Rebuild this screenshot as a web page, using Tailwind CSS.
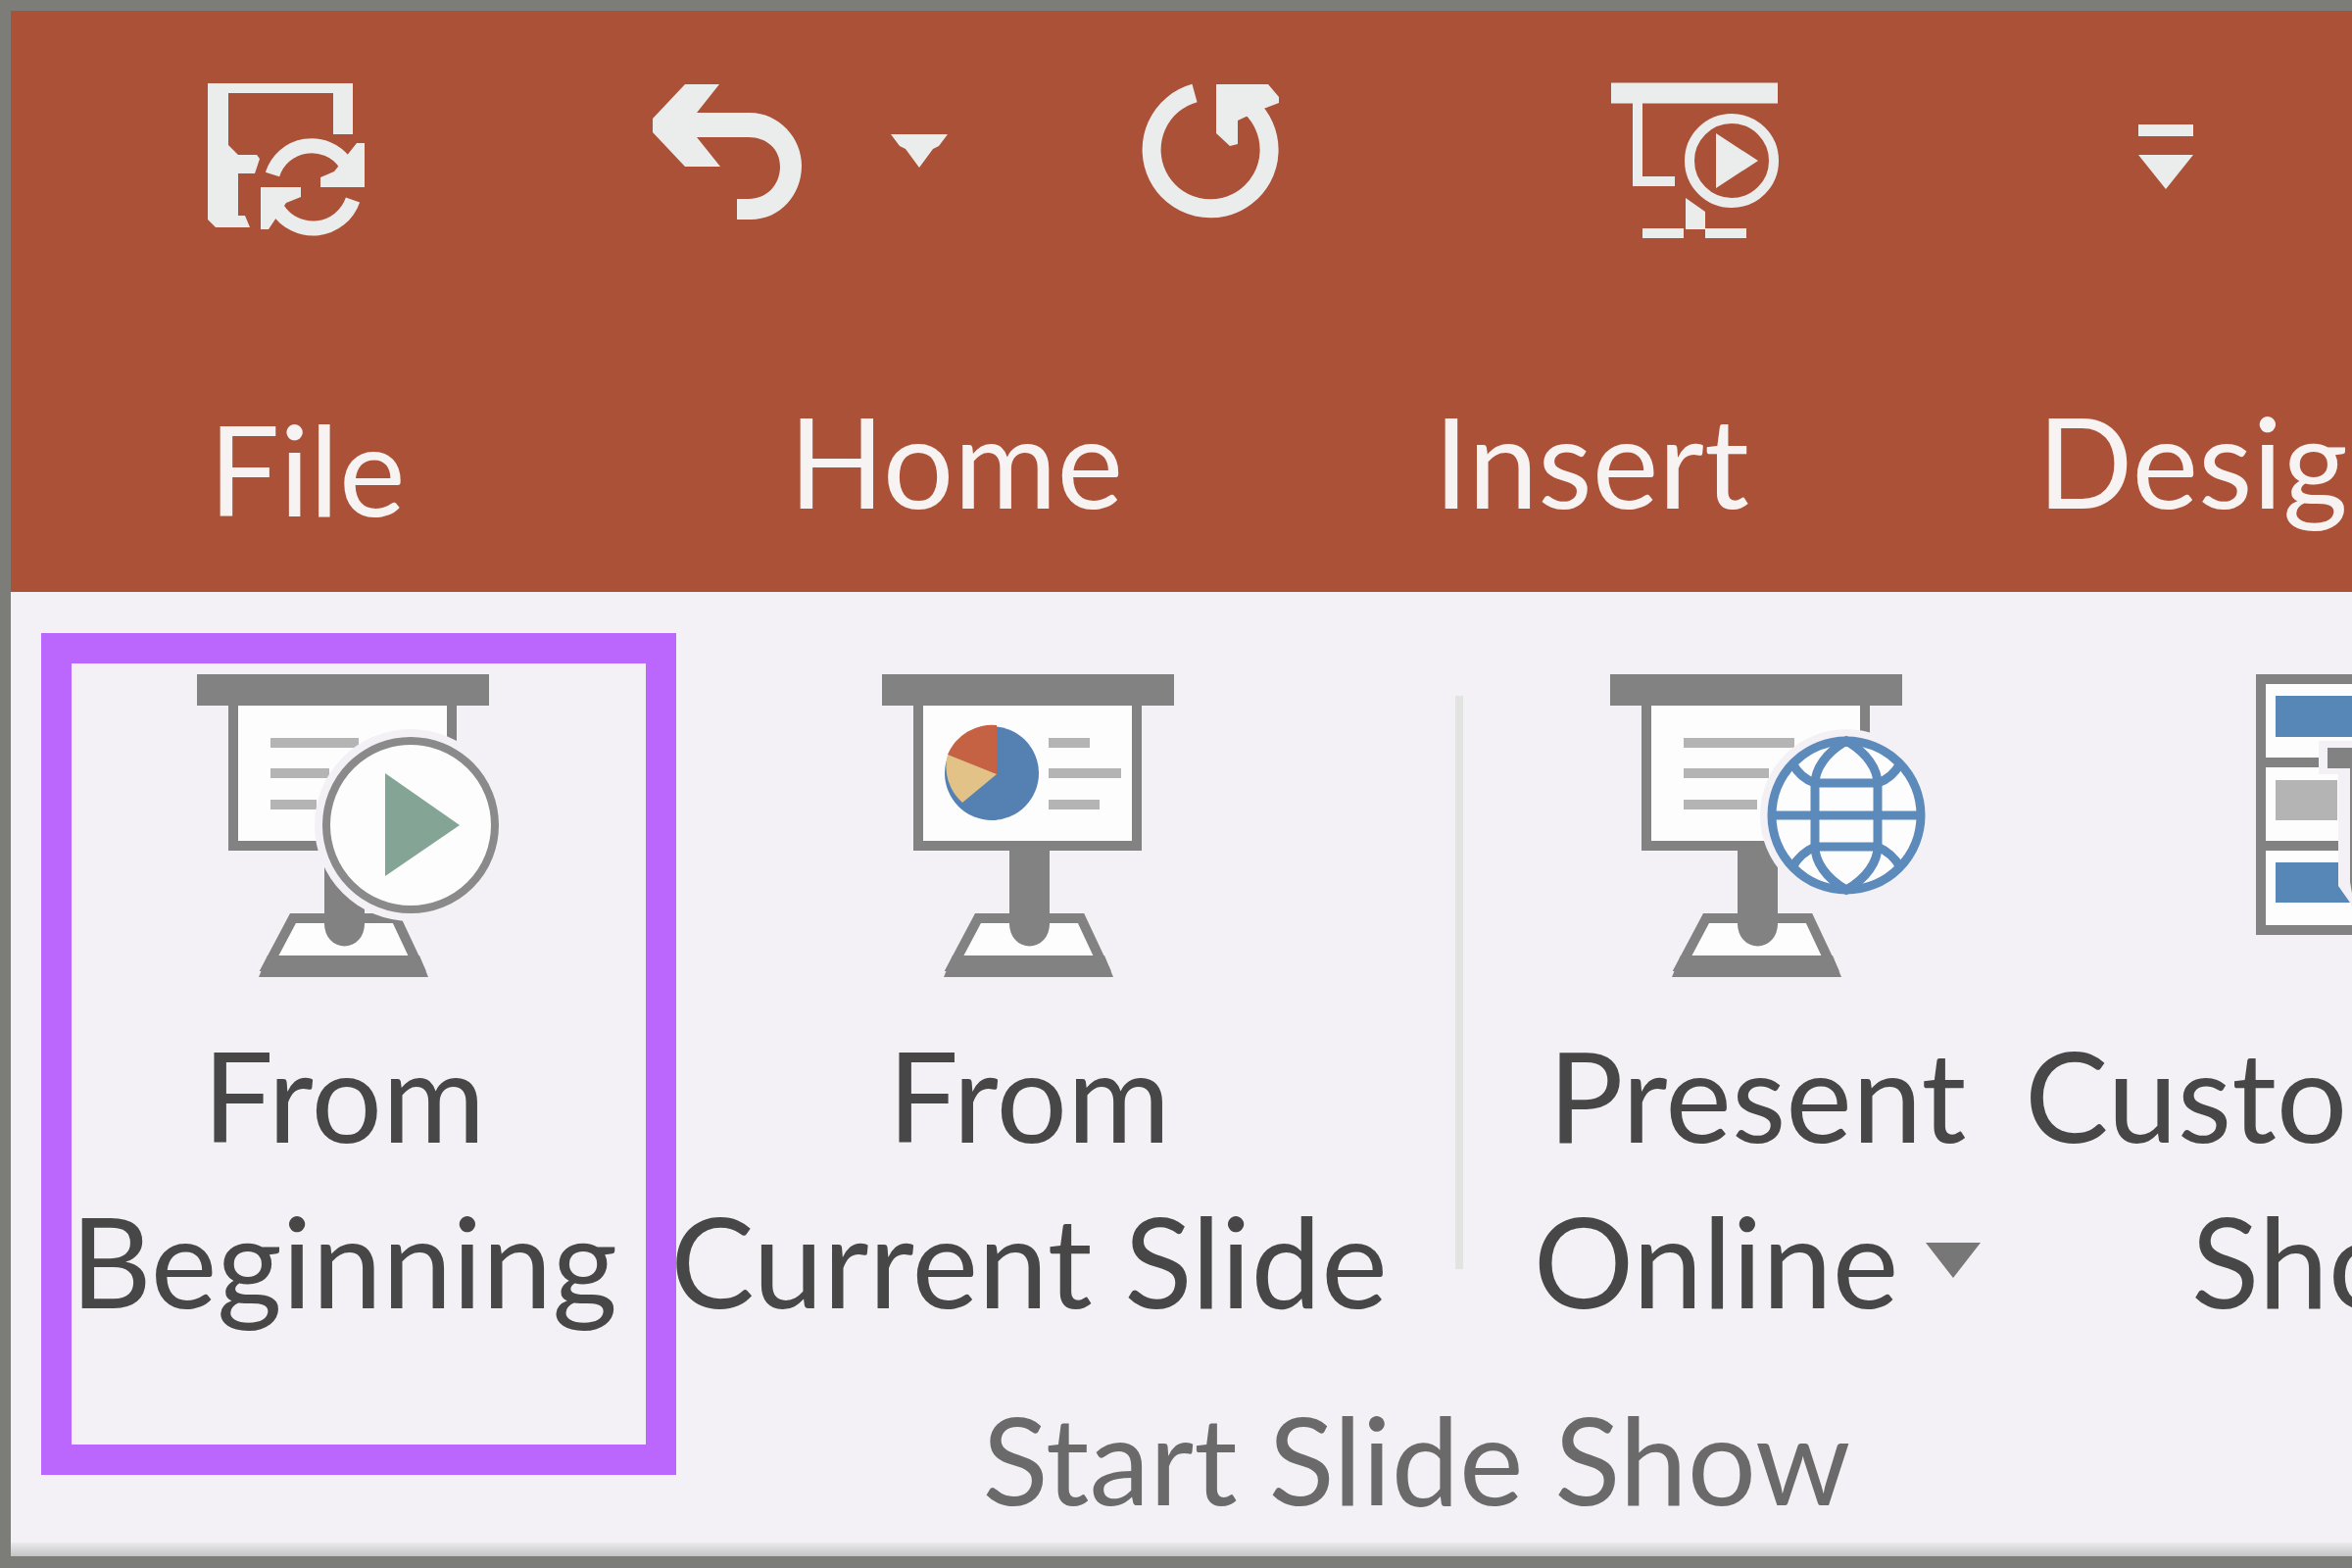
<!DOCTYPE html>
<html lang="en">
<head>
<meta charset="utf-8">
<title>Slide Show ribbon</title>
<script src="https://cdn.jsdelivr.net/npm/@tailwindcss/browser@4"></script>
</head>
<body class="overflow-hidden">
<div class="flex min-h-screen flex-col overflow-hidden border-t-11 border-b-12 border-l-11 border-[#7c7d79] bg-[#f3f1f5] font-['Lato','Open_Sans',sans-serif] text-[#474747]">

  <header class="bg-[#ab5137] pt-[73px] pb-9 text-[#ebedec]">
    <div class="flex h-[164px] items-start pl-[199px]" role="toolbar" aria-label="Quick access">
      <button class="mr-[290px] shrink-0" aria-label="Save">
        <svg class="block h-[164px] w-[164px]" viewBox="30 24 164 164" fill="currentColor">
          <path d="M32 25H180V77H160V35H53V88L63 98H82L85 102L80 117H63V160H70L75 172H40L32 164Z" />
          <path d="M98 118A42 42 0 0 1 172 106" fill="none" stroke="currentColor" stroke-width="15" />
          <path d="M192 86V131H147V121L161 115L184 86Z" />
          <path d="M180 144A43 43 0 0 1 103 153" fill="none" stroke="currentColor" stroke-width="15" />
          <path d="M86 174V131H127V141L112 147L94 174Z" />
        </svg>
      </button>
      <button class="mr-[88px] shrink-0" aria-label="Undo">
        <svg class="block h-[144px] w-[156px]" viewBox="24 23 156 144" fill="currentColor">
          <path d="M26 60L59 25H94L71 54H125C155 54 178 80 178 108C178 138 156 163 126 163H112V142H124C142 142 156 128 156 109C156 91 142 79 124 79H71L95 109H59L26 74Z" />
        </svg>
      </button>
      <button class="mr-[196px] shrink-0 pt-[53px]" aria-label="Undo history">
        <svg class="block h-9 w-15" viewBox="0 0 60 36" fill="currentColor"><path d="M1 0H59L50 12L44 15L30 34L16 15L10 12Z" /></svg>
      </button>
      <button class="mr-[334px] shrink-0" aria-label="Redo">
        <svg class="block h-[144px] w-[144px]" viewBox="23 23 144 144" fill="currentColor">
          <path d="M78 34A60 60 0 1 0 134 47" fill="none" stroke="currentColor" stroke-width="19" />
          <path d="M100 25H153L164 38V44L143 52L122 62V86L114 88L100 75Z" />
        </svg>
      </button>
      <button class="mr-[366px] shrink-0" aria-label="Start from beginning">
        <svg class="block h-[164px] w-[174px]" viewBox="20 24 174 164" fill="none" stroke="currentColor">
          <path d="M22 35H192" stroke-width="21" />
          <path d="M49 45V125H87" stroke-width="10" />
          <circle cx="145" cy="104" r="43" stroke-width="10" />
          <path d="M129 76L172 104L129 132Z" fill="currentColor" stroke="none" />
          <path d="M98 142L118 156V174H98Z" fill="currentColor" stroke="none" />
          <path d="M54 178H96M118 178H160" stroke-width="10" />
        </svg>
      </button>
      <button class="shrink-0 pt-[42px]" aria-label="Customize quick access toolbar">
        <svg class="block h-[68px] w-14" viewBox="0 0 56 68" fill="currentColor"><path d="M0 1H56V13H0ZM0 32H56L28 67Z" /></svg>
      </button>
    </div>

    <nav class="mt-[144px] flex h-44 items-start pl-[202px] text-[128px] leading-[156px] whitespace-nowrap text-[#f7f3f2]" aria-label="Ribbon tabs">
      <button class="w-[592px] shrink-0 pt-2 text-left">File</button>
      <a href="#home" class="w-[658px] shrink-0">Home</a>
      <a href="#insert" class="w-[616px] shrink-0">Insert</a>
      <a href="#design" class="shrink-0">Design</a>
    </nav>
  </header>

  <main class="flex grow flex-col">
    <section class="w-max grow" aria-label="Start Slide Show">
      <div class="flex pt-[76px] pr-[76px] text-[128px] leading-[169px] whitespace-nowrap">
        <div class="relative w-[680px]">
          <button class="flex w-full flex-col items-center">
            <svg class="mb-5 block h-[332px] w-[300px] overflow-visible" viewBox="20 10 300 332" fill="none" stroke="#828282" stroke-width="10">
              <path d="M57 50V193H280V50" fill="#fdfdfd" />
              <path d="M20 34H318" stroke-width="32" />
              <path d="M95 88H185M95 119H155M95 151H142" stroke="#b4b4b4" />
              <path d="M118 267H223L246 316H92Z" fill="#fdfdfd" />
              <path d="M83 327L92 305H247L256 327Z" fill="#828282" stroke="none" />
              <path d="M150 193H191V273A20 22 0 0 1 150 273Z" fill="#828282" stroke="none" />
              <circle cx="238" cy="172" r="98" fill="#f3f1f5" stroke="none" />
              <circle cx="238" cy="172" r="86" fill="#fdfdfd" stroke="#8a8a8a" stroke-width="8" />
              <path d="M212 119L288 172L212 224Z" fill="#84a495" stroke="none" />
            </svg>
            <span>From<br>Beginning</span>
          </button>
          <div class="pointer-events-none absolute -top-[34px] left-[31px] h-[859px] w-[648px] border-31 border-[#bb66fc]"></div>
        </div>

        <button class="flex w-[718px] flex-col items-center">
          <svg class="mb-5 block h-[332px] w-[300px] overflow-visible" viewBox="20 10 300 332" fill="none" stroke="#828282" stroke-width="10">
            <path d="M57 50V193H280V50" fill="#fdfdfd" />
            <path d="M20 34H318" stroke-width="32" />
            <g stroke="none">
              <circle cx="132" cy="119" r="48" fill="#5580b2" />
              <path d="M137 122V70A49 49 0 0 0 87 100Z" fill="#c56243" />
              <path d="M137 120L87 100A49 49 0 0 0 102 149Z" fill="#e2c287" />
            </g>
            <path d="M190 88H232M190 119H264M190 151H242" stroke="#b4b4b4" />
            <path d="M118 267H223L246 316H92Z" fill="#fdfdfd" />
            <path d="M83 327L92 305H247L256 327Z" fill="#828282" stroke="none" />
            <path d="M150 193H191V273A20 22 0 0 1 150 273Z" fill="#828282" stroke="none" />
          </svg>
          <span>From<br>Current Slide</span>
        </button>

        <div class="mr-[65px] ml-[76px] mt-[30px] h-[585px] w-2 shrink-0 bg-[#e2e4e2]"></div>

        <button class="flex w-[470px] flex-col items-center">
          <svg class="mb-5 block h-[332px] w-[300px] overflow-visible" viewBox="20 10 300 332" fill="none" stroke="#828282" stroke-width="10">
            <path d="M57 50V193H280V50" fill="#fdfdfd" />
            <path d="M20 34H318" stroke-width="32" />
            <path d="M95 88H208M95 119H182M95 151H170" stroke="#b4b4b4" />
            <path d="M118 267H223L246 316H92Z" fill="#fdfdfd" />
            <path d="M83 327L92 305H247L256 327Z" fill="#828282" stroke="none" />
            <path d="M150 193H191V273A20 22 0 0 1 150 273Z" fill="#828282" stroke="none" />
            <circle cx="261" cy="162" r="88" fill="#f3f1f5" stroke="none" />
            <g stroke="#5b8abb" stroke-width="9">
              <circle cx="261" cy="162" r="76" fill="#fdfdfd" />
              <path d="M185 162H337M225 129H297M225 194H297" />
              <path d="M261 86C240 98 229 115 229 130V194C229 209 240 226 261 238C282 226 293 209 293 194V130C293 115 282 98 261 86Z" />
              <path d="M206 109C212 120 220 126 229 129M316 109C310 120 302 126 293 129M206 215C212 204 220 198 229 194M316 215C310 204 302 198 293 194" />
            </g>
          </svg>
          <span>Present</span>
          <span class="flex items-center gap-7">Online
            <svg class="block h-9 w-14" viewBox="0 0 56 36" fill="#777"><path d="M0 0H56L28 36Z" /></svg>
          </span>
        </button>

        <button class="ml-9 flex w-[740px] flex-col items-center">
          <svg class="mb-5 block h-[332px] w-[300px] overflow-visible" viewBox="182 120 300 332" fill="none" stroke="#828282" stroke-width="10">
            <path d="M205 133H462V389H205Z" fill="#fdfdfd" />
            <path d="M205 218H462M205 303H462" />
            <path d="M220 150H447V192H220ZM220 320H447V361H220Z" fill="#5787b6" stroke="none" />
            <path d="M264 196H480V440H330L296 361L284 344V230H264Z" fill="#f3f1f5" stroke="none" />
            <path d="M220 236H283V277H220Z" fill="#b4b4b4" stroke="none" />
            <path d="M273 203H340V420H310L296 340V224H273Z" fill="#828282" stroke="none" />
          </svg>
          <span>Custom Slide</span>
          <span class="flex items-center gap-7">Show
            <svg class="block h-9 w-14" viewBox="0 0 56 36" fill="#777"><path d="M0 0H56L28 36Z" /></svg>
          </span>
        </button>
      </div>
      <h2 class="mt-[46px] text-center text-[124px] leading-[144px] text-[#6a6a6a]">Start Slide Show</h2>
    </section>
    <div class="h-[14px] bg-linear-to-b from-[#ebebed] to-[#c4c4c4]"></div>
  </main>
</div>
</body>
</html>
